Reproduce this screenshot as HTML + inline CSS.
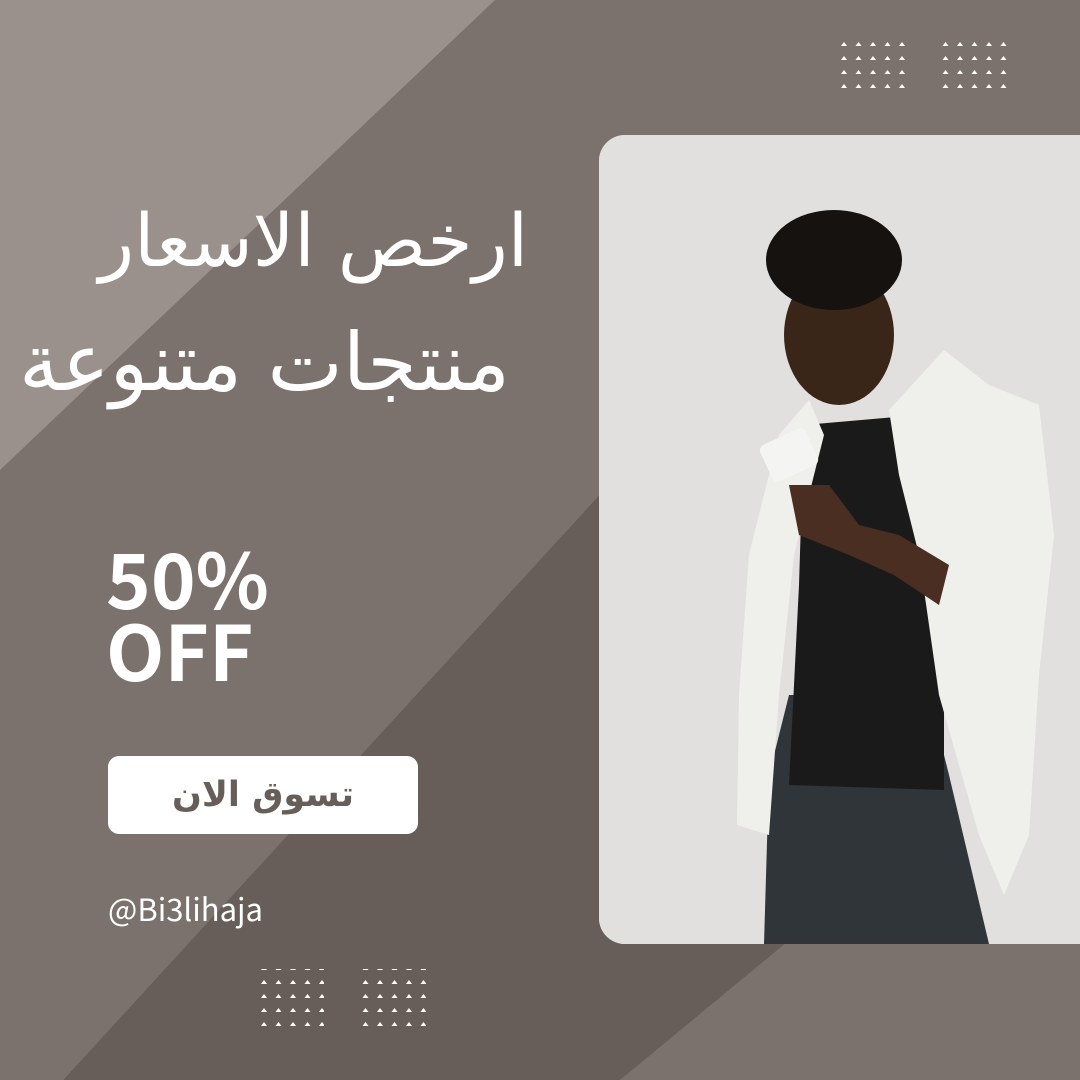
<!DOCTYPE html>
<html><head><meta charset="utf-8"><style>
*{margin:0;padding:0;box-sizing:border-box}
html,body{width:1080px;height:1080px;overflow:hidden}
body{position:relative;background:#7b726d;font-family:"Liberation Sans","DejaVu Sans",sans-serif}
svg.bg{position:absolute;left:0;top:0}
.t{position:absolute;color:#fff;white-space:nowrap}
.ar{font-family:"DejaVu Sans",sans-serif;direction:rtl}
.photo{position:absolute;left:599px;top:135px;width:481px;height:809px;border-radius:26px 0 0 26px;overflow:hidden;background:#e2e1df}
.btn{position:absolute;left:108px;top:756px;width:310px;height:78px;background:#fff;border-radius:11px;display:flex;align-items:center;justify-content:center;color:#675e59;font-weight:bold;font-size:35px}
</style></head><body>
<svg class="bg" width="1080" height="1080">
<polygon points="650,440 800,440 800,944 620,1080 0,1080 0,1149" fill="#675e59"/>
<polygon points="1080,700 1080,1080 620,1080" fill="#7b726d"/>
<polygon points="0,0 495,0 0,470" fill="#9a918c"/>
</svg>
<svg class="bg" width="1080" height="1080">
<defs><pattern id="p" width="14.5" height="14" patternUnits="userSpaceOnUse"><polygon points="0,4 3,0 6,4" fill="#fff"/></pattern></defs>
<rect x="838" y="35" width="70" height="62" fill="url(#p)"/>
<rect x="941" y="35" width="70" height="62" fill="url(#p)"/>
<rect x="254" y="969" width="70" height="62" fill="url(#p)"/>
<rect x="356" y="969" width="70" height="62" fill="url(#p)"/>
</svg>
<div class="photo">
<svg width="481" height="809" viewBox="0 0 481 809">
<rect width="481" height="809" fill="#e1e0de"/>
<path d="M165,809 L170,640 L190,560 L330,560 L350,640 L390,809Z" fill="#2f3538"/>
<path d="M205,290 L320,280 L345,450 L345,655 L190,650 L200,450Z" fill="#1a1a1a"/>
<path d="M210,265 L180,300 L150,420 L140,560 L138,690 L170,700 L180,560 L195,420 L225,300Z" fill="#efefec"/>
<path d="M290,275 L345,215 L390,250 L440,270 L455,400 L440,540 L430,700 L405,760 L380,700 L340,560 L320,420 L300,340Z" fill="#efefec"/>
<path d="M190,350 L230,350 L260,390 L300,400 L350,430 L340,470 L295,440 L250,420 L200,400Z" fill="#4a2e22"/>
<rect x="165" y="300" width="50" height="40" rx="6" fill="#f4f4f2" transform="rotate(-25 190 320)"/>
<ellipse cx="240" cy="200" rx="55" ry="70" fill="#3a2519"/>
<ellipse cx="235" cy="125" rx="68" ry="50" fill="#151210"/>
</svg>
</div>
<div class="t ar" style="right:552px;top:192px;font-size:73px;line-height:100px">ارخص الاسعار</div>
<div class="t ar" style="right:570px;top:308px;font-size:80px;line-height:110px">منتجات متنوعة</div>
<div class="t" style="left:106px;top:540px;font-size:76px;font-weight:bold;line-height:72px;font-family:'Noto Sans CJK SC','Liberation Sans',sans-serif">50%<br>OFF</div>
<div class="btn ar">تسوق الان</div>
<div class="t" style="left:108px;top:888px;font-size:31px;line-height:40px;font-family:'Noto Sans CJK SC','Liberation Sans',sans-serif">@Bi3lihaja</div>
</body></html>
